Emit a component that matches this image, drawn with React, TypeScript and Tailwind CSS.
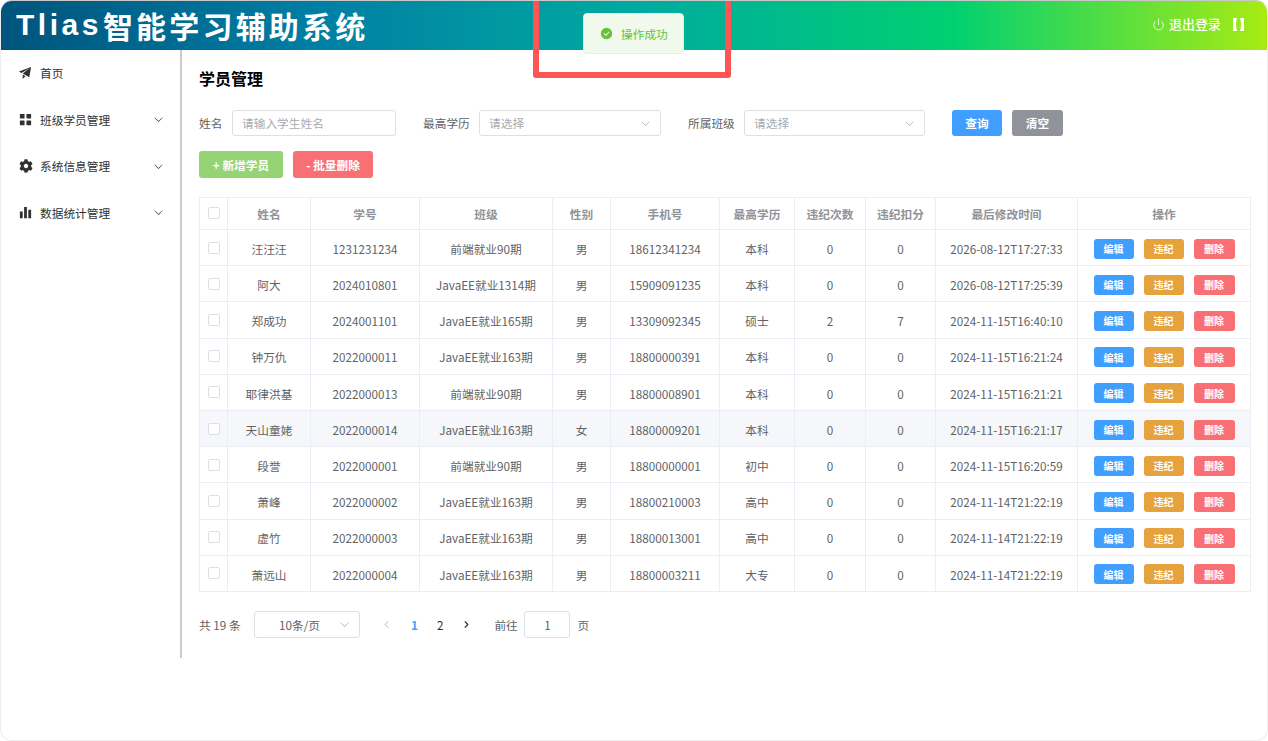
import { Power, ChevronLeft, ChevronRight } from "lucide-react"
import { FaCog } from "react-icons/fa"

const rows = [
  ["汪汪汪", "1231231234", "前端就业90期", "男", "18612341234", "本科", "0", "0", "2026-08-12T17:27:33"],
  ["阿大", "2024010801", "JavaEE就业1314期", "男", "15909091235", "本科", "0", "0", "2026-08-12T17:25:39"],
  ["郑成功", "2024001101", "JavaEE就业165期", "男", "13309092345", "硕士", "2", "7", "2024-11-15T16:40:10"],
  ["钟万仇", "2022000011", "JavaEE就业163期", "男", "18800000391", "本科", "0", "0", "2024-11-15T16:21:24"],
  ["耶律洪基", "2022000013", "前端就业90期", "男", "18800008901", "本科", "0", "0", "2024-11-15T16:21:21"],
  ["天山童姥", "2022000014", "JavaEE就业163期", "女", "18800009201", "本科", "0", "0", "2024-11-15T16:21:17"],
  ["段誉", "2022000001", "前端就业90期", "男", "18800000001", "初中", "0", "0", "2024-11-15T16:20:59"],
  ["萧峰", "2022000002", "JavaEE就业163期", "男", "18800210003", "高中", "0", "0", "2024-11-14T21:22:19"],
  ["虚竹", "2022000003", "JavaEE就业163期", "男", "18800013001", "高中", "0", "0", "2024-11-14T21:22:19"],
  ["萧远山", "2022000004", "JavaEE就业163期", "男", "18800003211", "大专", "0", "0", "2024-11-14T21:22:19"],
]

const headers = ["姓名", "学号", "班级", "性别", "手机号", "最高学历", "违纪次数", "违纪扣分", "最后修改时间", "操作"]
const colWidths = [28, 83, 109, 133, 58, 109, 75, 71, 70, 142, 173]

function ElIcon({ d, className }: { d: string; className?: string }) {
  return (
    <svg viewBox="0 0 1024 1024" fill="currentColor" className={className}>
      <path d={d} />
    </svg>
  )
}

const promotion = "m64 448 832-320-128 704-446.08-243.328L832 192 242.816 545.472zm256 512V657.024L512 768z"
const grid =
  "M160 448a32 32 0 0 1-32-32V160.064a32 32 0 0 1 32-32h256a32 32 0 0 1 32 32V416a32 32 0 0 1-32 32zm448 0a32 32 0 0 1-32-32V160.064a32 32 0 0 1 32-32h255.936a32 32 0 0 1 32 32V416a32 32 0 0 1-32 32zM160 896a32 32 0 0 1-32-32V608a32 32 0 0 1 32-32h256a32 32 0 0 1 32 32v256a32 32 0 0 1-32 32zm448 0a32 32 0 0 1-32-32V608a32 32 0 0 1 32-32h255.936a32 32 0 0 1 32 32v256a32 32 0 0 1-32 32z"
const histogram = "M416 896V128h192v768zm-288 0V448h192v448zm576 0V320h192v576z"
const arrowDown =
  "M831.872 340.864 512 652.672 192.128 340.864a30.592 30.592 0 0 0-42.752 0 29.12 29.12 0 0 0 0 41.6L489.664 714.24a32 32 0 0 0 44.672 0l340.288-331.712a29.12 29.12 0 0 0 0-41.728 30.592 30.592 0 0 0-42.752 0z"
const successFilled =
  "M512 64a448 448 0 1 1 0 896 448 448 0 0 1 0-896m-55.808 536.384-99.52-99.584a38.4 38.4 0 1 0-54.336 54.336l126.72 126.72a38.272 38.272 0 0 0 54.336 0l262.4-262.464a38.4 38.4 0 1 0-54.272-54.336z"

function MenuRow({ icon, label, arrow = true }: { icon: React.ReactNode; label: string; arrow?: boolean }) {
  return (
    <div className="flex h-[46.67px] items-center pb-[1px] pl-[17px] pr-[16px] text-[11.7px] text-[#303133]">
      <span className="flex h-[15px] w-[15px] items-center justify-center">{icon}</span>
      <span className="ml-[7px] flex-1">{label}</span>
      {arrow && <ElIcon d={arrowDown} className="h-[11px] w-[11px]" />}
    </div>
  )
}

function Select({ width }: { width: string }) {
  return (
    <div className={`${width} flex h-[26px] items-center justify-between rounded-[3px] border border-[#dcdfe6] pl-[9px] pr-[9px] text-[11.7px] text-[#a8abb2]`}>
      <span>请选择</span>
      <ElIcon d={arrowDown} className="h-[11px] w-[11px] text-[#a8abb2]" />
    </div>
  )
}

function Checkbox() {
  return <span className="inline-block h-3 w-3 rounded-[2px] border border-[#dcdfe6] bg-white" />
}

function ActionButton({ label, color, width }: { label: string; color: string; width: string }) {
  return (
    <span className={`${color} ${width} inline-flex h-5 items-center justify-center rounded-[3px] text-[10px] font-bold text-white`}>
      {label}
    </span>
  )
}

export default function App() {
  return (
    <div className="relative h-[741px] w-[1268px] overflow-hidden rounded-[12px] border border-[#eeeeee] border-t-[#c8c8c8] bg-white font-['Noto_Sans_CJK_SC',sans-serif]">
      <header className="flex h-[49px] items-center justify-between bg-[linear-gradient(to_right,#00547d,#007fa4,#00aaa0,#00d072,#a8eb12)] pl-[15px] pr-[23px] text-white">
        <h1 className="flex items-center pb-[1px] text-[30px] font-bold leading-none tracking-[3.2px]">
          <span className="font-['Liberation_Sans',sans-serif] tracking-[3.5px]">Tlias</span>
          <span className="ml-[1px]">智能学习辅助系统</span>
        </h1>
        <div className="flex items-center pb-[3px] text-[13px]">
          <Power className="h-[13px] w-[13px]" strokeWidth={1.5} />
          <span className="ml-[4px] font-medium">退出登录</span>
          <svg viewBox="0 0 11 13" fill="#ffffff" className="ml-[12px] h-[13px] w-[11px]">
            <path d="M0 0h4Q2 6.5 4 13H0zM11 0H7Q9 6.5 7 13h4z" />
          </svg>
        </div>
      </header>

      <div className="flex">
        <aside className="h-[608px] w-[181px] shrink-0 border-r-2 border-[#cccccc]">
          <MenuRow arrow={false} icon={<ElIcon d={promotion} className="h-[15px] w-[15px]" />} label="首页" />
          <MenuRow icon={<ElIcon d={grid} className="h-[15px] w-[15px]" />} label="班级学员管理" />
          <MenuRow icon={<FaCog className="h-[14px] w-[14px]" />} label="系统信息管理" />
          <MenuRow icon={<ElIcon d={histogram} className="h-[15px] w-[15px]" />} label="数据统计管理" />
        </aside>

        <main className="flex-1 pl-[17px] pt-[16px]">
          <h2 className="h-6 text-[16px] font-bold leading-6 text-black">学员管理</h2>

          <div className="mt-[20px] flex items-center text-[11.7px] text-[#606266]">
            <span className="w-[33px]">姓名</span>
            <div className="flex h-[26px] w-[164px] items-center rounded-[3px] border border-[#dcdfe6] pl-[9px] text-[#a8abb2]">请输入学生姓名</div>
            <span className="ml-[27px] w-[56px]">最高学历</span>
            <Select width="w-[182px]" />
            <span className="ml-[27px] w-[56px]">所属班级</span>
            <Select width="w-[181px]" />
            <span className="ml-[27px] flex h-[26px] w-[50px] items-center justify-center rounded-[3px] bg-[#409eff] font-bold text-white">查询</span>
            <span className="ml-[10px] flex h-[26px] w-[51px] items-center justify-center rounded-[3px] bg-[#909399] font-bold text-white">清空</span>
          </div>

          <div className="mt-[15px] flex h-[27px] gap-[10px] text-[11.7px] font-bold text-white">
            <span className="flex w-[84px] items-center justify-center rounded-[3px] bg-[#95d475]">+ 新增学员</span>
            <span className="flex w-[80px] items-center justify-center rounded-[3px] bg-[#f87074]">- 批量删除</span>
          </div>

          <table className="mt-[19px] w-[1052px] table-fixed border-collapse text-center text-[11.7px] text-[#606266]">
            <colgroup>
              {colWidths.map((w, i) => (
                <col key={i} style={{ width: w }} />
              ))}
            </colgroup>
            <thead>
              <tr className="h-[32px] font-bold text-[#909399]">
                <th className="border border-[#ebeef5] pb-[2px]">
                  <span className="flex justify-center"><Checkbox /></span>
                </th>
                {headers.map((h) => (
                  <th key={h} className="border border-[#ebeef5] font-bold">{h}</th>
                ))}
              </tr>
            </thead>
            <tbody>
              {rows.map((row, i) => (
                <tr key={row[1]} className={i === 5 ? "h-[36.2px] bg-[#f5f7fa]" : "h-[36.2px]"}>
                  <td className="border border-[#ebeef5]">
                    <span className="flex justify-center"><Checkbox /></span>
                  </td>
                  {row.map((cell, j) => (
                    <td key={j} className="border border-[#ebeef5] pt-[2px]">{cell}</td>
                  ))}
                  <td className="border border-[#ebeef5] pt-[2px]">
                    <div className="flex justify-center gap-[10px]">
                      <ActionButton label="编辑" color="bg-[#409eff]" width="w-10" />
                      <ActionButton label="违纪" color="bg-[#e6a23c]" width="w-10" />
                      <ActionButton label="删除" color="bg-[#f87074]" width="w-[41px]" />
                    </div>
                  </td>
                </tr>
              ))}
            </tbody>
          </table>

          <div className="mt-[19px] flex h-[27px] items-center text-[11.7px] text-[#606266]">
            <span className="w-[55px]">共 19 条</span>
            <div className="flex h-[27px] w-[106px] items-center justify-between rounded-[3px] border border-[#dcdfe6] pl-[24px] pr-[9px]">
              <span>10条/页</span>
              <ElIcon d={arrowDown} className="h-[11px] w-[11px] text-[#a8abb2]" />
            </div>
            <ChevronLeft className="ml-[21px] h-[11px] w-[11px] text-[#a8abb2]" />
            <span className="ml-[19px] font-bold text-[#409eff]">1</span>
            <span className="ml-[19px] text-[#303133]">2</span>
            <ChevronRight className="ml-[18px] h-[11px] w-[11px] text-[#303133]" strokeWidth={2.5} />
            <span className="ml-[22px] w-[30px]">前往</span>
            <div className="flex h-[27px] w-[46px] items-center justify-center rounded-[3px] border border-[#dcdfe6]">1</div>
            <span className="ml-[7px]">页</span>
          </div>
        </main>
      </div>

      {/* message toast plus the red annotation box drawn over the page */}
      <div className="absolute left-[582px] top-[12px] flex h-[41px] w-[101px] items-center rounded-[4px] border border-[#e1f3d8] bg-[#f0f9eb] pl-[16px] text-[11.7px] text-[#67c23a]">
        <ElIcon d={successFilled} className="h-[13px] w-[13px]" />
        <span className="ml-[8px]">操作成功</span>
      </div>
      <div className="absolute left-[532px] top-[-7px] h-[84px] w-[198px] rounded-[3px] border-[6px] border-[#fd5454]" />
    </div>
  )
}
